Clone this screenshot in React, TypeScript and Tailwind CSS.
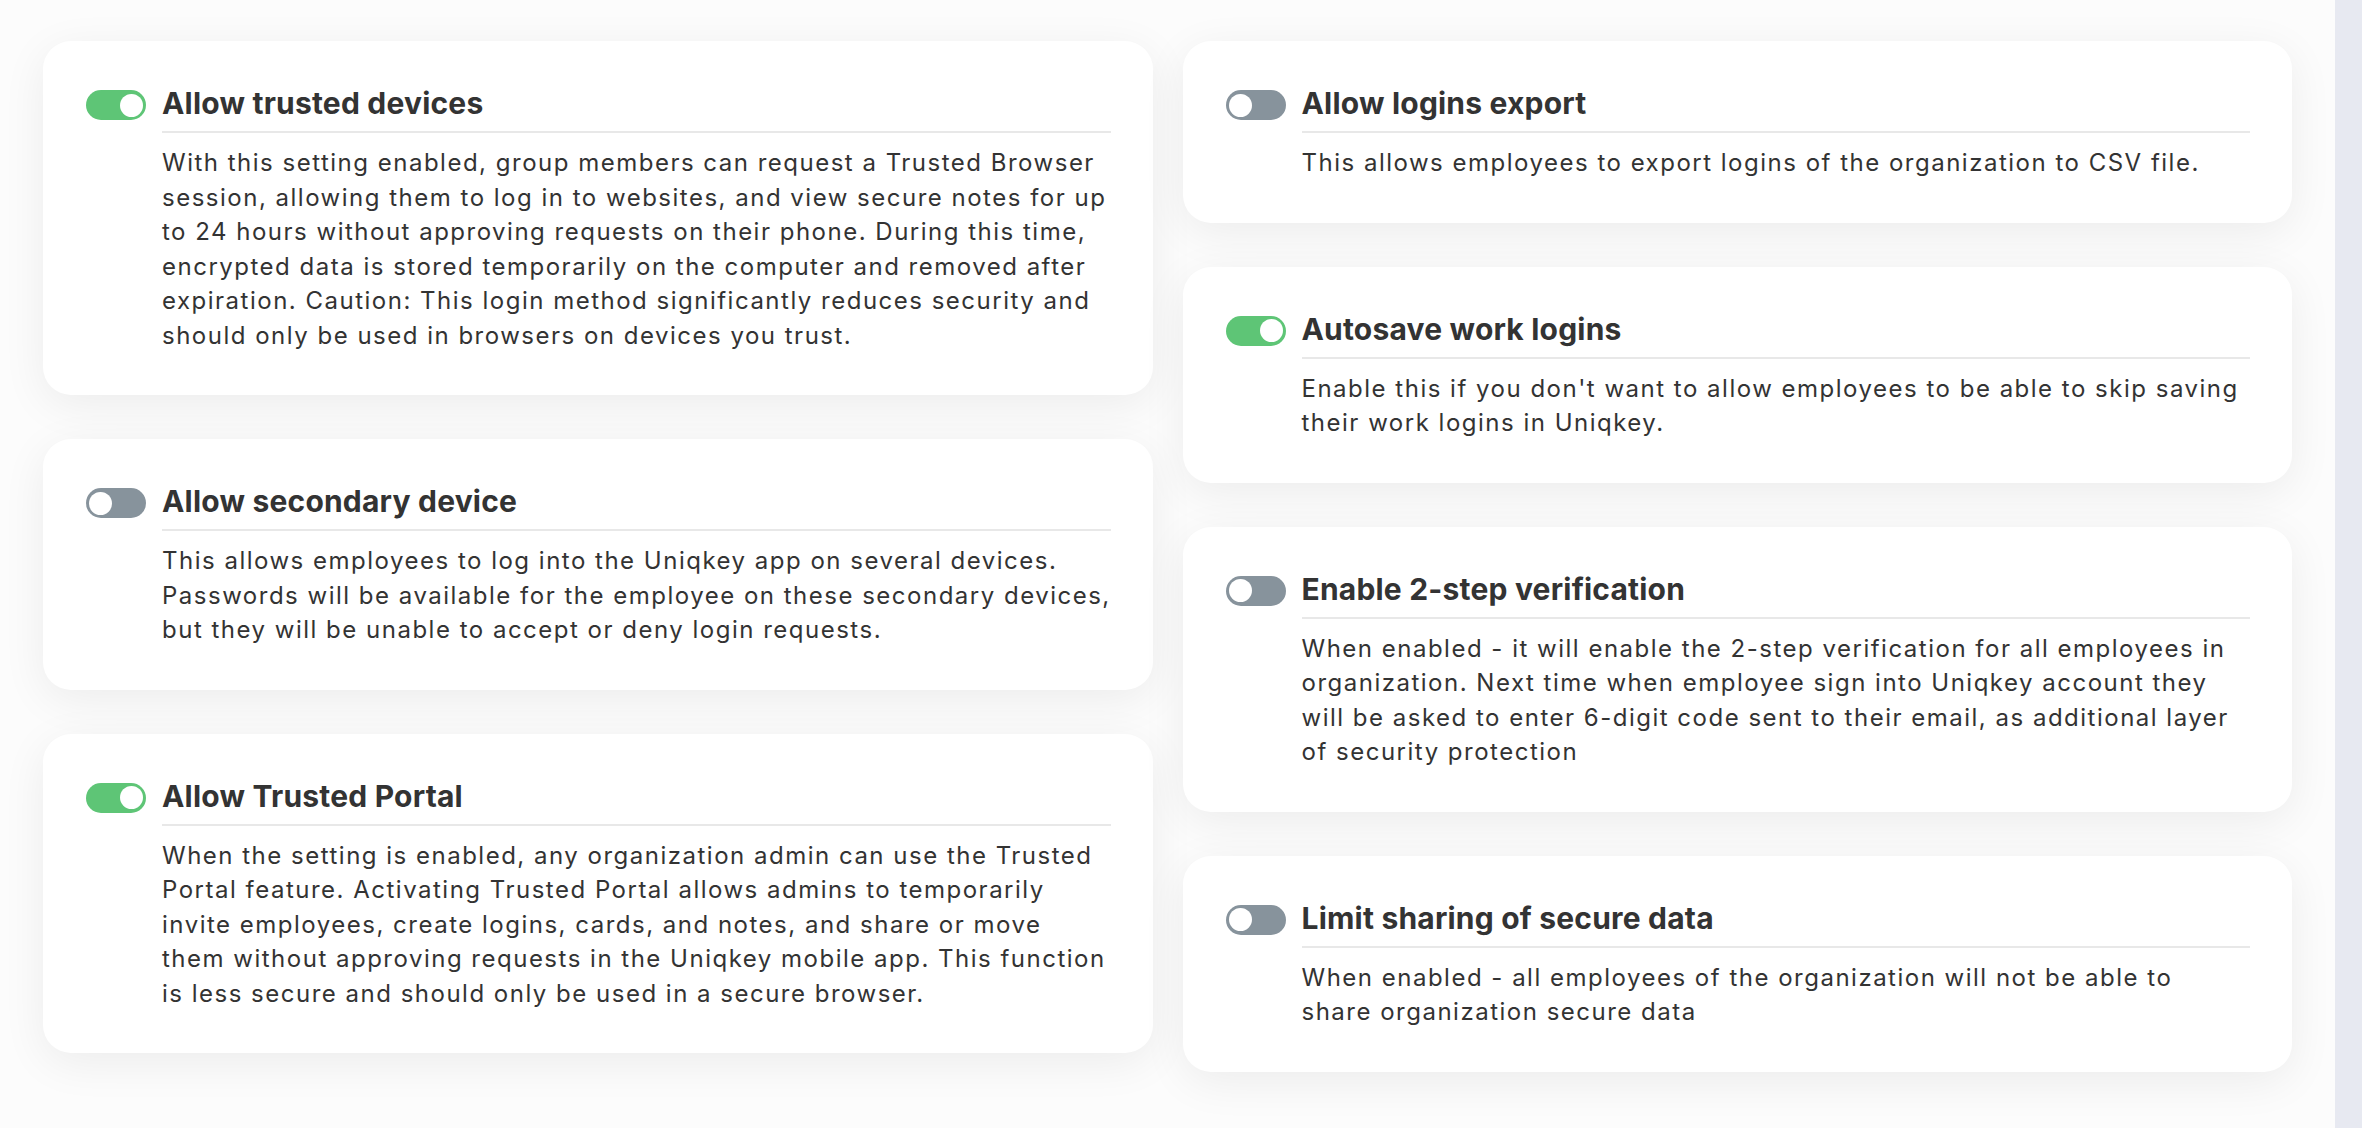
const settings = {
  left: [
    {
      title: "Allow trusted devices",
      enabled: true,
      lines: [
        "With this setting enabled, group members can request a Trusted Browser",
        "session, allowing them to log in to websites, and view secure notes for up",
        "to 24 hours without approving requests on their phone. During this time,",
        "encrypted data is stored temporarily on the computer and removed after",
        "expiration. Caution: This login method significantly reduces security and",
        "should only be used in browsers on devices you trust.",
      ],
    },
    {
      title: "Allow secondary device",
      enabled: false,
      lines: [
        "This allows employees to log into the Uniqkey app on several devices.",
        "Passwords will be available for the employee on these secondary devices,",
        "but they will be unable to accept or deny login requests.",
      ],
    },
    {
      title: "Allow Trusted Portal",
      enabled: true,
      lines: [
        "When the setting is enabled, any organization admin can use the Trusted",
        "Portal feature. Activating Trusted Portal allows admins to temporarily",
        "invite employees, create logins, cards, and notes, and share or move",
        "them without approving requests in the Uniqkey mobile app. This function",
        "is less secure and should only be used in a secure browser.",
      ],
    },
  ],
  right: [
    {
      title: "Allow logins export",
      enabled: false,
      lines: ["This allows employees to export logins of the organization to CSV file."],
    },
    {
      title: "Autosave work logins",
      enabled: true,
      lines: [
        "Enable this if you don't want to allow employees to be able to skip saving",
        "their work logins in Uniqkey.",
      ],
    },
    {
      title: "Enable 2-step verification",
      enabled: false,
      lines: [
        "When enabled - it will enable the 2-step verification for all employees in",
        "organization. Next time when employee sign into Uniqkey account they",
        "will be asked to enter 6-digit code sent to their email, as additional layer",
        "of security protection",
      ],
    },
    {
      title: "Limit sharing of secure data",
      enabled: false,
      lines: [
        "When enabled - all employees of the organization will not be able to",
        "share organization secure data",
      ],
    },
  ],
};

type Setting = { title: string; enabled: boolean; lines: string[] };

function Toggle({ on }: { on: boolean }) {
  return (
    <div
      className={
        on
          ? "mt-[7px] flex h-[30px] w-[60px] shrink-0 items-center justify-end rounded-full bg-[#5ec576] px-[3px]"
          : "mt-[7px] flex h-[30px] w-[60px] shrink-0 items-center justify-start rounded-full bg-[#87939c] px-[3px]"
      }
    >
      <div className="h-[23px] w-[23px] rounded-full bg-white" />
    </div>
  );
}

function SettingCard({ item }: { item: Setting }) {
  return (
    <div className="flex gap-[16px] rounded-[28px] bg-white p-[42px] pl-[43px] shadow-[0_10px_45px_rgba(0,0,0,0.065)]">
      <Toggle on={item.enabled} />
      <div className="flex-1">
        <h3 className="-mt-[3px] text-[30px] font-bold leading-[46px] tracking-[0.2px] text-[#333333]">{item.title}</h3>
        <div className="mt-[5px] h-[2px] bg-[#e8e8e8]" />
        <p className="mt-[13px] text-[24px] leading-[34.5px] tracking-[1.5px] text-[#333333]">
          {item.lines.map((line) => (
            <span key={line} className="block whitespace-nowrap">
              {line}
            </span>
          ))}
        </p>
      </div>
    </div>
  );
}

export default function App() {
  return (
    <div className="flex min-h-screen bg-[#fcfcfc] font-['Inter','Noto_Sans',sans-serif]">
      <div className="flex-1 px-[43px] pt-[41px] pb-[50px]">
        <div className="grid grid-cols-2 gap-x-[30px]">
          <div className="flex flex-col gap-[44px]">
            {settings.left.map((s) => (
              <SettingCard key={s.title} item={s} />
            ))}
          </div>
          <div className="flex flex-col gap-[44px]">
            {settings.right.map((s) => (
              <SettingCard key={s.title} item={s} />
            ))}
          </div>
        </div>
      </div>
      <div className="w-[27px] shrink-0 bg-[#e7e9f1]" />
    </div>
  );
}
